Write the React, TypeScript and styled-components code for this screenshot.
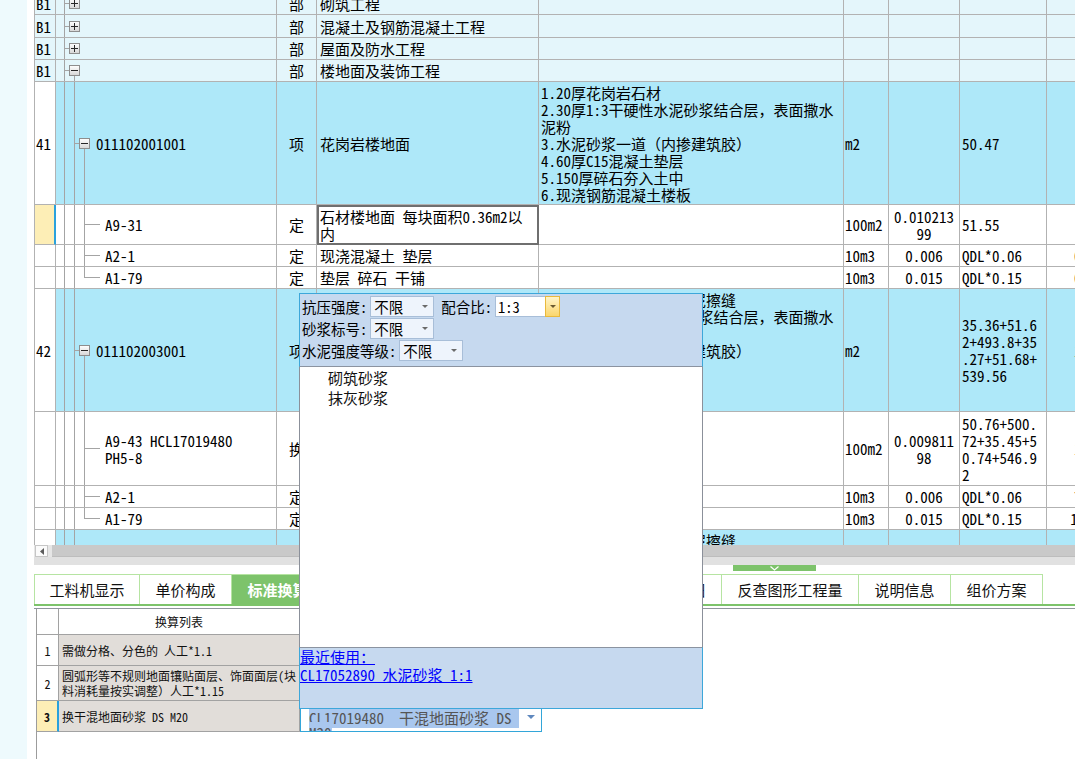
import React from 'react';
import styled, { createGlobalStyle } from 'styled-components';

const SONG = `"Noto Sans Mono CJK SC", "Noto Sans CJK SC", "DejaVu Sans Mono", monospace`;
const HEI = `"Noto Sans CJK SC", "Noto Sans", sans-serif`;

const LINE = '#b2b2b2';
const PART_BG = '#e4f6fb';
const ITEM_BG = '#aee8f9';
const CUR_BG = '#fdeeb6';
const CUR_EDGE = '#2aa1dc';
const PANEL_BLUE = '#c6d9ef';

const GlobalStyle = createGlobalStyle`
  html, body { margin: 0; padding: 0; background: #fff; }
  body { width: 1075px; height: 759px; overflow: hidden; font-family: ${SONG}; }
  #root { width: 1075px; height: 759px; }
  *, *::before, *::after { box-sizing: border-box; }
`;

type Tone = 'part' | 'item' | 'plain';
type Tree = 'partClosed' | 'partOpen' | 'item' | 'child' | 'lastChild';
type NoState = 'tone' | 'white' | 'current';

interface GridRowData {
  h: number;
  tone: Tone;
  no: string;
  noState: NoState;
  tree: Tree;
  code?: string;
  kind: string;
  name?: string;
  editing?: boolean;
  feature?: string;
  unit?: string;
  qty?: string;
  expr?: string;
  amount?: string;
}

const FEATURE_TAIL = [
  '2.30厚1:3干硬性水泥砂浆结合层，表面撒水',
  '泥粉',
  '3.水泥砂浆一道（内掺建筑胶）',
  '4.60厚C15混凝土垫层',
  '5.150厚碎石夯入土中',
  '6.现浇钢筋混凝土楼板',
];
const F41 = ['1.20厚花岗岩石材', ...FEATURE_TAIL].join('\n');
const F42 = ['1.20厚花岗岩石材，水泥擦缝', ...FEATURE_TAIL].join('\n');

const ROWS: GridRowData[] = [
  { h: 22, tone: 'part', no: 'B1', noState: 'tone', tree: 'partClosed', kind: '部', name: '砌筑工程' },
  { h: 23, tone: 'part', no: 'B1', noState: 'tone', tree: 'partClosed', kind: '部', name: '混凝土及钢筋混凝土工程' },
  { h: 22, tone: 'part', no: 'B1', noState: 'tone', tree: 'partClosed', kind: '部', name: '屋面及防水工程' },
  { h: 22, tone: 'part', no: 'B1', noState: 'tone', tree: 'partOpen', kind: '部', name: '楼地面及装饰工程' },
  {
    h: 123, tone: 'item', no: '41', noState: 'white', tree: 'item', code: '011102001001', kind: '项',
    name: '花岗岩楼地面', feature: F41, unit: 'm2', expr: '50.47',
  },
  {
    h: 40, tone: 'plain', no: '', noState: 'current', tree: 'child', code: 'A9-31', kind: '定',
    name: '石材楼地面 每块面积0.36m2以\n内', editing: true, unit: '100m2', qty: '0.010213\n99', expr: '51.55',
  },
  {
    h: 22, tone: 'plain', no: '', noState: 'white', tree: 'child', code: 'A2-1', kind: '定',
    name: '现浇混凝土 垫层', unit: '10m3', qty: '0.006', expr: 'QDL*0.06', amount: '0.3028',
  },
  {
    h: 22, tone: 'plain', no: '', noState: 'white', tree: 'lastChild', code: 'A1-79', kind: '定',
    name: '垫层 碎石 干铺', unit: '10m3', qty: '0.015', expr: 'QDL*0.15', amount: '0.7571',
  },
  {
    h: 123, tone: 'item', no: '42', noState: 'white', tree: 'item', code: '011102003001', kind: '项',
    name: '块料楼地面', feature: F42, unit: 'm2', expr: '35.36+51.6\n2+493.8+35\n.27+51.68+\n539.56', amount: '1199.9',
  },
  {
    h: 74, tone: 'plain', no: '', noState: 'white', tree: 'child', code: 'A9-43 HCL17019480\nPH5-8', kind: '换',
    name: '块料楼地面 水泥砂浆', unit: '100m2', qty: '0.009811\n98', expr: '50.76+500.\n72+35.45+5\n0.74+546.9\n2', amount: '1.1938',
  },
  {
    h: 22, tone: 'plain', no: '', noState: 'white', tree: 'child', code: 'A2-1', kind: '定',
    name: '现浇混凝土 垫层', unit: '10m3', qty: '0.006', expr: 'QDL*0.06', amount: '7.1946',
  },
  {
    h: 22, tone: 'plain', no: '', noState: 'white', tree: 'lastChild', code: 'A1-79', kind: '定',
    name: '垫层 碎石 干铺', unit: '10m3', qty: '0.015', expr: 'QDL*0.15', amount: '15.2365',
  },
  {
    h: 123, tone: 'item', no: '43', noState: 'white', tree: 'item', code: '011102003002', kind: '项',
    name: '块料楼地面', feature: F42, unit: 'm2', expr: '',
  },
];

/* ---------- page shell ---------- */

const Shell = styled.div`
  position: relative;
  display: flex;
  width: 1075px;
  height: 759px;
  overflow: hidden;
  background: #fff;
`;

const SideStrip = styled.div`
  flex: none;
  width: 27px;
  background: #eefafd;
`;

const SideGap = styled.div`
  flex: none;
  width: 7px;
  background: #fff;
`;

const Main = styled.div`
  flex: 1;
  min-width: 0;
  display: flex;
  flex-direction: column;
`;

/* ---------- upper grid ---------- */

const GridViewport = styled.div`
  flex: none;
  height: 545px;
  overflow: hidden;
`;

const GridBody = styled.div`
  width: 1113px;
  margin-top: -7px;
`;

const Row = styled.div<{ $h: number; $tone: Tone }>`
  display: grid;
  grid-template-columns: 22px 221px 40px 222px 305px 45px 71px 87px 100px;
  height: ${(p) => p.$h}px;
  background: ${(p) => (p.$tone === 'part' ? PART_BG : p.$tone === 'item' ? ITEM_BG : '#fff')};
  font-family: ${SONG};
  font-size: 15px;
  line-height: 17px;
  color: #000;
`;

const Cell = styled.div<{ $center?: boolean }>`
  display: flex;
  align-items: center;
  justify-content: ${(p) => (p.$center ? 'center' : 'flex-start')};
  text-align: ${(p) => (p.$center ? 'center' : 'left')};
  min-width: 0;
  padding: 0 2px;
  border-right: 1px solid ${LINE};
  border-bottom: 1px solid ${LINE};
  white-space: pre;
  overflow: hidden;
`;

const RowNo = styled(Cell)<{ $state: NoState }>`
  padding: 0 1px;
  border-left: 1px solid ${LINE};
  background: ${(p) => (p.$state === 'current' ? CUR_BG : p.$state === 'white' ? '#fff' : 'transparent')};
  border-right: ${(p) => (p.$state === 'current' ? `2px solid ${CUR_EDGE}` : `1px solid ${LINE}`)};
`;

const CodeCell = styled(Cell)`
  padding: 0;
`;

const CodeText = styled.span`
  white-space: pre;
`;

const NameCell = styled(Cell)<{ $editing?: boolean }>`
  padding: 0 3px;
  outline: ${(p) => (p.$editing ? '2px solid #6f6f6f' : 'none')};
  outline-offset: -2px;
`;

const FeatureCell = styled(Cell)`
  padding: 0 2px;
`;

const UnitCell = styled(Cell)`
  padding: 0 1px;
`;

const TreeSvg = styled.svg`
  flex: none;
  display: block;
  align-self: flex-start;
`;

function TreeGlyph({ kind, h }: { kind: Tree; h: number }) {
  const ch = h - 1;
  const yc = Math.floor(ch / 2) + 0.5;
  const w = kind === 'child' || kind === 'lastChild' ? 49 : kind === 'item' ? 40 : 30;
  const st = '#a4a4a4';
  const parts: React.ReactNode[] = [];
  const v = (x: number, y1: number, y2: number, k: string) =>
    parts.push(<line key={k} x1={x} x2={x} y1={y1} y2={y2} stroke={st} />);
  const hz = (x1: number, x2: number, y: number, k: string) =>
    parts.push(<line key={k} x1={x1} x2={x2} y1={y} y2={y} stroke={st} />);
  const box = (cx: number, plus: boolean, k: string) => {
    parts.push(
      <g key={k}>
        <rect x={cx - 5} y={yc - 5} width={10} height={10} fill="url(#treeBoxFill)" stroke="#8e8e8e" />
        <line x1={cx - 3.5} x2={cx + 3.5} y1={yc} y2={yc} stroke="#262626" />
        {plus && <line x1={cx} x2={cx} y1={yc - 3.5} y2={yc + 3.5} stroke="#262626" />}
      </g>,
    );
  };
  v(8.5, 0, ch, 'root');
  if (kind === 'partClosed' || kind === 'partOpen') {
    hz(8.5, 13, yc, 'stub');
    if (kind === 'partOpen') v(18.5, yc + 5, ch, 'down');
    box(18.5, kind === 'partClosed', 'box');
  } else {
    v(18.5, 0, ch, 'l1');
    if (kind === 'item') {
      hz(18.5, 23, yc, 'stub');
      v(28.5, yc + 5, ch, 'down');
      box(28.5, false, 'box');
    } else {
      v(28.5, 0, kind === 'lastChild' ? yc : ch, 'l2');
      hz(28.5, 44, yc, 'stub');
    }
  }
  return (
    <TreeSvg width={w} height={ch} viewBox={`0 0 ${w} ${ch}`} shapeRendering="crispEdges">
      <defs>
        <linearGradient id="treeBoxFill" x1="0" y1="0" x2="0" y2="1">
          <stop offset="0" stopColor="#ffffff" />
          <stop offset="1" stopColor="#d6d6d6" />
        </linearGradient>
      </defs>
      {parts}
    </TreeSvg>
  );
}

function GridRow({ r }: { r: GridRowData }) {
  return (
    <Row $h={r.h} $tone={r.tone}>
      <RowNo $state={r.noState}>{r.no}</RowNo>
      <CodeCell>
        <TreeGlyph kind={r.tree} h={r.h} />
        {r.code && <CodeText>{r.code}</CodeText>}
      </CodeCell>
      <Cell $center>{r.kind}</Cell>
      <NameCell $editing={r.editing}>{r.name}</NameCell>
      <FeatureCell>{r.feature}</FeatureCell>
      <UnitCell>{r.unit}</UnitCell>
      <Cell $center>{r.qty}</Cell>
      <Cell>{r.expr}</Cell>
      <Cell $center>{r.amount}</Cell>
    </Row>
  );
}

/* ---------- scroll bar / splitter ---------- */

const HScroll = styled.div`
  flex: none;
  display: flex;
  height: 12px;
  background: #e6e6e6;
  padding-left: 1px;
`;

const ScrollBtn = styled.div`
  flex: none;
  width: 13px;
  height: 12px;
  display: flex;
  align-items: center;
  justify-content: center;
  background: #fbfbfb;
  border: 1px solid #c6c6c6;
`;

const ScrollThumb = styled.div`
  flex: 1;
  margin-left: 4px;
  background: #c9c9c9;
  border-bottom: 1px solid #bdbdbd;
`;

const SplitTrack = styled.div`
  flex: none;
  height: 8px;
  background: #e1e1e1;
`;

const SplitFoot = styled.div`
  flex: none;
  height: 9px;
  padding-left: 699px;
  background: #fff;
`;

const SplitHandle = styled.div`
  width: 83px;
  height: 6px;
  background: #7dc36b;
  display: flex;
  align-items: center;
  justify-content: center;
`;

/* ---------- tabs ---------- */

const TabBar = styled.div`
  flex: none;
  display: flex;
  height: 32px;
  border-bottom: 2px solid #7dc36b;
`;

const Tab = styled.div<{ $w: number; $active?: boolean; $first?: boolean }>`
  flex: none;
  width: ${(p) => p.$w}px;
  height: 30px;
  display: flex;
  align-items: center;
  justify-content: center;
  border-top: 1px solid #b6e4a2;
  border-right: 1px solid #b6e4a2;
  border-left: ${(p) => (p.$first ? '1px solid #b6e4a2' : 'none')};
  background: ${(p) => (p.$active ? '#7dc36b' : '#fff')};
  color: ${(p) => (p.$active ? '#fff' : '#111')};
  font-family: ${SONG};
  font-size: 15px;
  font-weight: ${(p) => (p.$active ? 700 : 400)};
  white-space: nowrap;
`;

const TABS: { label: string; w: number; active?: boolean }[] = [
  { label: '工料机显示', w: 106 },
  { label: '单价构成', w: 92 },
  { label: '标准换算', w: 92, active: true },
  { label: '换算信息', w: 92 },
  { label: '安装费用', w: 92 },
  { label: '特征及内容', w: 106 },
  { label: '工程量明细', w: 108 },
  { label: '反查图形工程量', w: 137 },
  { label: '说明信息', w: 92 },
  { label: '组价方案', w: 92 },
];

const TabGap = styled.div`
  flex: none;
  height: 2px;
`;

/* ---------- lower table ---------- */

const BottomPanel = styled.div`
  flex: 1;
  display: flex;
  flex-direction: column;
  border-top: 1px solid #8f949c;
  padding-left: 2px;
`;

const CalcTable = styled.div`
  flex: 1;
  border-left: 1px solid #9c9c9c;
  font-family: ${SONG};
  font-size: 12px;
  line-height: 15px;
  color: #111;
`;

const CalcRow = styled.div<{ $h: number }>`
  display: grid;
  grid-template-columns: 22px 241px 242px;
  height: ${(p) => p.$h}px;
`;

const CalcCell = styled.div<{ $bg?: string; $center?: boolean; $current?: boolean }>`
  display: flex;
  align-items: center;
  justify-content: ${(p) => (p.$center ? 'center' : 'flex-start')};
  padding: 0 3px;
  background: ${(p) => p.$bg ?? '#fff'};
  border-bottom: 1px solid #a2a2a2;
  border-right: ${(p) => (p.$current ? `2px solid ${CUR_EDGE}` : '1px solid #a2a2a2')};
  font-weight: ${(p) => (p.$current ? 700 : 400)};
  overflow: hidden;
  white-space: pre;
`;

const CalcBlank = styled.div``;

const Editor = styled.div`
  display: flex;
  align-items: flex-start;
  gap: 6px;
  padding: 8px 6px 0 8px;
  background: #fff;
  border: 1px solid #33a6d9;
  overflow: hidden;
  font-size: 15px;
  line-height: 15px;
`;

const EditorText = styled.div`
  flex: 1;
  min-width: 0;
  white-space: pre-wrap;
  color: #555;
`;

const Selected = styled.span`
  background: #a9c7ee;
`;

const EditorCaret = styled.svg`
  flex: none;
  margin-top: 5px;
`;

/* ---------- popup ---------- */

const Popup = styled.div`
  position: absolute;
  left: 299px;
  top: 293px;
  width: 404px;
  height: 416px;
  display: flex;
  flex-direction: column;
  font-family: ${SONG};
  color: #000;
`;

const FilterPanel = styled.div`
  flex: none;
  height: 74px;
  display: flex;
  flex-direction: column;
  gap: 1px;
  padding: 2px 0 0 2px;
  background: ${PANEL_BLUE};
  border: 1px solid #3da7da;
  border-bottom-color: #8b93a0;
  font-size: 14.5px;
  line-height: 19px;
`;

const FilterRow = styled.div`
  display: flex;
  align-items: center;
  height: 21px;
`;

const FilterLabel = styled.span<{ $gap?: number }>`
  white-space: nowrap;
  margin-left: ${(p) => p.$gap ?? 0}px;
  margin-right: 3px;
`;

const SelectBox = styled.div<{ $w: number }>`
  flex: none;
  width: ${(p) => p.$w}px;
  height: 21px;
  display: flex;
  align-items: center;
  justify-content: space-between;
  padding: 0 5px 0 3px;
  background: #eef4fc;
  border: 1px solid #a8bed8;
`;

const ComboInput = styled.div`
  flex: none;
  width: 50px;
  height: 21px;
  display: flex;
  align-items: center;
  padding-left: 2px;
  background: #fff;
  border: 1px solid #a8bed8;
  border-right: none;
`;

const ComboButton = styled.div`
  flex: none;
  width: 15px;
  height: 21px;
  display: flex;
  align-items: center;
  justify-content: center;
  background: linear-gradient(#fff4c8, #fbd66c);
  border: 1px solid #e9b93c;
`;

const ListArea = styled.div`
  flex: 1;
  padding-top: 1px;
  background: #fff;
  border-left: 1px solid #8b909a;
  border-right: 1px solid #8b909a;
`;

const ListItem = styled.div`
  height: 20px;
  padding-left: 28px;
  font-family: ${HEI};
  font-size: 15px;
  line-height: 20px;
  color: #111;
`;

const RecentPanel = styled.div`
  flex: none;
  height: 62px;
  background: ${PANEL_BLUE};
  border: 1px solid #3da7da;
  border-top-color: #8b93a0;
  font-size: 15px;
  line-height: 18px;
`;

const RecentLink = styled.a`
  display: table;
  color: #0000ff;
  text-decoration: underline;
  white-space: pre;
  cursor: pointer;
`;

function Caret({ color, w = 7, h = 4 }: { color: string; w?: number; h?: number }) {
  return (
    <svg width={w} height={h} viewBox={`0 0 ${w} ${h}`}>
      <path d={`M0 0H${w}L${w / 2} ${h}Z`} fill={color} />
    </svg>
  );
}

export default function App() {
  return (
    <>
      <GlobalStyle />
      <Shell>
        <SideStrip />
        <SideGap />
        <Main>
          <GridViewport>
            <GridBody>
              {ROWS.map((r, i) => (
                <GridRow key={i} r={r} />
              ))}
            </GridBody>
          </GridViewport>

          <HScroll>
            <ScrollBtn>
              <svg width="4" height="7" viewBox="0 0 4 7">
                <path d="M4 0V7L0 3.5Z" fill="#5c5c5c" />
              </svg>
            </ScrollBtn>
            <ScrollThumb />
          </HScroll>
          <SplitTrack />
          <SplitFoot>
            <SplitHandle>
              <svg width="9" height="5" viewBox="0 0 9 5">
                <path d="M0.5 0.5L4.5 4L8.5 0.5" fill="none" stroke="#fff" strokeWidth="1.2" />
              </svg>
            </SplitHandle>
          </SplitFoot>

          <TabBar>
            {TABS.map((t, i) => (
              <Tab key={t.label} $w={t.w} $active={t.active} $first={i === 0}>
                {t.label}
              </Tab>
            ))}
          </TabBar>
          <TabGap />

          <BottomPanel>
            <CalcTable>
              <CalcRow $h={26}>
                <CalcCell />
                <CalcCell $center>换算列表</CalcCell>
                <CalcBlank />
              </CalcRow>
              <CalcRow $h={31}>
                <CalcCell $center>1</CalcCell>
                <CalcCell $bg="#e1ddd9">需做分格、分色的 人工*1.1</CalcCell>
                <CalcBlank />
              </CalcRow>
              <CalcRow $h={35}>
                <CalcCell $center>2</CalcCell>
                <CalcCell $bg="#e1ddd9">{'圆弧形等不规则地面镶贴面层、饰面面层(块\n料消耗量按实调整）人工*1.15'}</CalcCell>
                <CalcBlank />
              </CalcRow>
              <CalcRow $h={31}>
                <CalcCell $center $current $bg={CUR_BG}>3</CalcCell>
                <CalcCell $bg="#e1ddd9">换干混地面砂浆 DS M20</CalcCell>
                <Editor>
                  <EditorText>
                    <Selected>{'CL17019480  干混地面砂浆 DS M20'}</Selected>
                  </EditorText>
                  <EditorCaret width="8" height="4" viewBox="0 0 8 4">
                    <path d="M0 0H8L4 4Z" fill="#5f88be" />
                  </EditorCaret>
                </Editor>
              </CalcRow>
            </CalcTable>
          </BottomPanel>
        </Main>

        <Popup>
          <FilterPanel>
            <FilterRow>
              <FilterLabel>抗压强度:</FilterLabel>
              <SelectBox $w={64}>
                不限
                <Caret color="#6a6a6a" w={6} h={3} />
              </SelectBox>
              <FilterLabel $gap={7}>配合比:</FilterLabel>
              <ComboInput>1:3</ComboInput>
              <ComboButton>
                <Caret color="#6a5a30" w={6} h={3} />
              </ComboButton>
            </FilterRow>
            <FilterRow>
              <FilterLabel>砂浆标号:</FilterLabel>
              <SelectBox $w={64}>
                不限
                <Caret color="#6a6a6a" w={6} h={3} />
              </SelectBox>
            </FilterRow>
            <FilterRow>
              <FilterLabel>水泥强度等级:</FilterLabel>
              <SelectBox $w={64}>
                不限
                <Caret color="#6a6a6a" w={6} h={3} />
              </SelectBox>
            </FilterRow>
          </FilterPanel>
          <ListArea>
            <ListItem>砌筑砂浆</ListItem>
            <ListItem>抹灰砂浆</ListItem>
          </ListArea>
          <RecentPanel>
            <RecentLink>最近使用：</RecentLink>
            <RecentLink>CL17052890 水泥砂浆 1:1</RecentLink>
          </RecentPanel>
        </Popup>
      </Shell>
    </>
  );
}
